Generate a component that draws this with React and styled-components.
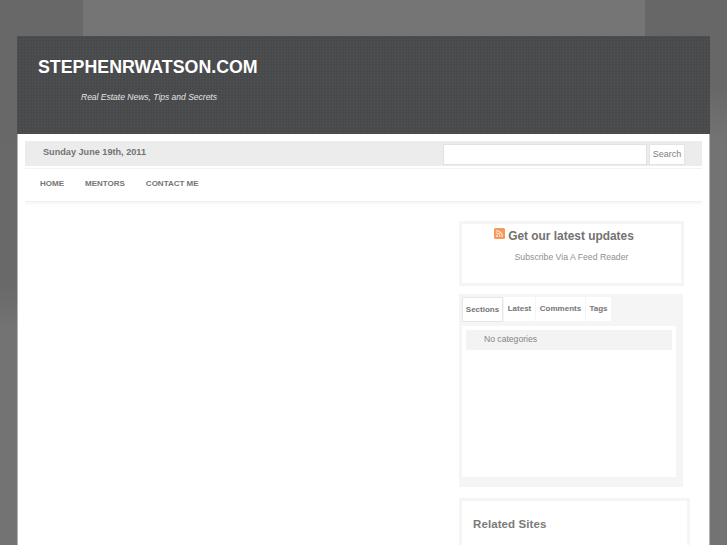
import React from 'react';
import styled, { createGlobalStyle } from 'styled-components';

const GlobalStyle = createGlobalStyle`
  html, body {
    margin: 0;
    padding: 0;
    height: 100%;
    overflow: hidden;
  }
  body {
    font-family: 'Liberation Sans', Arial, sans-serif;
    background-color: #757575;
    background-image:
      linear-gradient(to bottom, #686868 0, #696969 285px, #737373 330px),
      linear-gradient(to bottom, #676767 0, #676767 85px, #737373 140px);
    background-size: 83px 100%, 82px 100%;
    background-position: left top, right top;
    background-repeat: no-repeat;
  }
`;

const Page = styled.div`
  width: 693px;
  margin: 36px 0 0 17px;
  height: 509px;
  overflow: hidden;
  background: #fff;
`;

const Header = styled.header`
  height: 98px;
  box-sizing: border-box;
  padding: 20px 21px 0;
  background-color: #48494b;
  background-image:
    repeating-linear-gradient(to right, rgba(255,255,255,0.018) 0 1px, transparent 1px 3px),
    repeating-linear-gradient(to bottom, rgba(255,255,255,0.018) 0 1px, transparent 1px 3px);
`;

const SiteTitle = styled.h1`
  margin: 0;
  font-size: 17.8px;
  line-height: 22px;
  font-weight: bold;
  color: #fff;
`;

const Tagline = styled.div`
  margin: 13px 0 0 43px;
  font-size: 8.5px;
  line-height: 12px;
  font-style: italic;
  color: #e4e4e4;
`;

const Content = styled.div`
  height: 411px;
  border-left: 1px solid #b4b4b4;
  border-right: 1px solid #b4b4b4;
  padding: 7px 7px 0;
`;

const DateBar = styled.div`
  height: 25px;
  display: flex;
  justify-content: space-between;
  align-items: center;
  background: #ececec;
  padding: 0 17px 0 18px;
`;

const DateText = styled.div`
  font-size: 9.15px;
  font-weight: bold;
  color: #737373;
  margin-top: -4px;
`;

const SearchForm = styled.div`
  display: flex;
  gap: 2px;
  margin-top: 2px;
`;

const SearchInput = styled.div`
  box-sizing: border-box;
  width: 204px;
  height: 21px;
  background: #fff;
  border: 1px solid #e2e2e2;
`;

const SearchButton = styled.div`
  box-sizing: border-box;
  width: 36px;
  height: 21px;
  background: #fff;
  border: 1px solid #e4e4e4;
  font-size: 9px;
  line-height: 19px;
  text-align: center;
  color: #808080;
`;

const Nav = styled.nav`
  margin-top: 2px;
  height: 29px;
  padding: 0 15px 3px;
  border-top: 1px solid #f3f3f3;
  border-bottom: 1px solid #f0f0f0;
  box-shadow: 0 2px 0 #f8f8f8;
  display: flex;
  align-items: center;
  gap: 21px;
`;

const NavLink = styled.a`
  font-size: 8px;
  font-weight: bold;
  color: #757575;
`;

const Main = styled.div`
  display: flex;
  justify-content: flex-end;
  padding: 19px 12px 0 0;
`;

const Sidebar = styled.aside`
  width: 231px;
  display: flex;
  flex-direction: column;
  align-items: flex-start;
`;

const SubscribeBox = styled.div`
  width: 225px;
  height: 65px;
  box-sizing: border-box;
  border: 3px solid #f6f5f5;
  padding-top: 4px;
  text-align: center;
  background: #fff;
`;

const SubscribeTitle = styled.div`
  font-size: 11.9px;
  line-height: 16px;
  font-weight: bold;
  color: #727272;
  display: flex;
  align-items: flex-start;
  justify-content: center;
  gap: 3px;
  margin-right: 15px;
`;

const RssIcon = styled.svg`
  width: 11px;
  height: 11px;
  flex: none;
`;

const SubscribeLink = styled.div`
  margin-top: 7px;
  font-size: 8.7px;
  line-height: 12px;
  color: #8f8f8f;
`;

const TabsBox = styled.div`
  margin-top: 8px;
  width: 224px;
  height: 193px;
  box-sizing: border-box;
  background: #f5f5f5;
  padding: 3px 7px 10px 3px;
  display: flex;
  flex-direction: column;
`;

const TabRow = styled.div`
  display: flex;
  gap: 1px;
  height: 29px;
  flex: none;
  align-items: flex-start;
`;

const Tab = styled.div`
  box-sizing: border-box;
  height: ${p => (p.$active ? 25 : 24)}px;
  width: ${p => p.$width}px;
  background: #fff;
  border: ${p => (p.$active ? '1px solid #e6e6e6' : 'none')};
  font-size: 8px;
  font-weight: bold;
  line-height: ${p => (p.$active ? 24 : 23)}px;
  text-align: center;
  color: #757575;
`;

const TabPanel = styled.div`
  flex: 1;
  background: #fff;
  padding: 4px;
`;

const CategoryRow = styled.div`
  height: 20px;
  background: #f3f3f3;
  padding-left: 18px;
  font-size: 8.6px;
  line-height: 19px;
  color: #858585;
`;

const RelatedBox = styled.div`
  margin-top: 11px;
  width: 231px;
  box-sizing: border-box;
  height: 100px;
  border: 3px solid #f6f5f5;
  padding: 15px 11px;
  background: #fff;
`;

const RelatedTitle = styled.h3`
  margin: 0;
  font-size: 11.5px;
  line-height: 16px;
  font-weight: bold;
  color: #7a7a7a;
  letter-spacing: 0.1px;
`;

function App() {
  return (
    <>
      <GlobalStyle />
      <Page>
        <Header>
          <SiteTitle>STEPHENRWATSON.COM</SiteTitle>
          <Tagline>Real Estate News, Tips and Secrets</Tagline>
        </Header>
        <Content>
          <DateBar>
            <DateText>Sunday June 19th, 2011</DateText>
            <SearchForm>
              <SearchInput />
              <SearchButton>Search</SearchButton>
            </SearchForm>
          </DateBar>
          <Nav>
            <NavLink>HOME</NavLink>
            <NavLink>MENTORS</NavLink>
            <NavLink>CONTACT ME</NavLink>
          </Nav>
          <Main>
            <Sidebar>
              <SubscribeBox>
                <SubscribeTitle>
                  <RssIcon viewBox="0 0 11 11">
                    <rect width="11" height="11" rx="1.5" fill="#f59a5a" />
                    <circle cx="3" cy="8" r="1.1" fill="#fde3cf" />
                    <path d="M2 5a4 4 0 0 1 4 4M2 2.6A6.4 6.4 0 0 1 8.4 9" fill="none" stroke="#fde3cf" strokeWidth="1.2" />
                  </RssIcon>
                  Get our latest updates
                </SubscribeTitle>
                <SubscribeLink>Subscribe Via A Feed Reader</SubscribeLink>
              </SubscribeBox>
              <TabsBox>
                <TabRow>
                  <Tab $active $width={41}>Sections</Tab>
                  <Tab $width={31}>Latest</Tab>
                  <Tab $width={49}>Comments</Tab>
                  <Tab $width={25}>Tags</Tab>
                </TabRow>
                <TabPanel>
                  <CategoryRow>No categories</CategoryRow>
                </TabPanel>
              </TabsBox>
              <RelatedBox>
                <RelatedTitle>Related Sites</RelatedTitle>
              </RelatedBox>
            </Sidebar>
          </Main>
        </Content>
      </Page>
    </>
  );
}

export default App;
